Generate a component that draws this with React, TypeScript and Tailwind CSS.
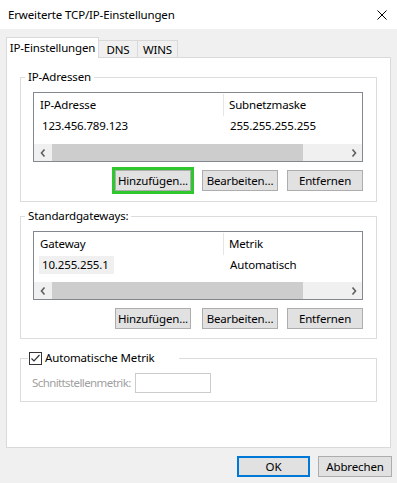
import React from "react";

const Chevron = ({ dir }: { dir: "left" | "right" }) => (
  <svg width="6" height="8" viewBox="0 0 6 8">
    {dir === "left" ? (
      <polyline points="4.5,0.5 1.5,4 4.5,7.5" fill="none" stroke="#606060" strokeWidth="1.6" />
    ) : (
      <polyline points="1.5,0.5 4.5,4 1.5,7.5" fill="none" stroke="#606060" strokeWidth="1.6" />
    )}
  </svg>
);

const ScrollBar = () => (
  <div className="flex h-[17px] bg-[#f0f0f0]">
    <div className="w-[17px] flex items-center justify-center">
      <Chevron dir="left" />
    </div>
    <div className="w-[251px] ml-px bg-[#cdcdcd]" />
    <div className="flex-1" />
    <div className="w-[17px] flex items-center justify-center">
      <Chevron dir="right" />
    </div>
  </div>
);

const Btn = ({ label, hl }: { label: string; hl?: boolean }) => (
  <button
    className={
      "w-[76px] h-[21px] bg-[#e1e1e1] border border-[#adadad] flex items-center justify-center leading-none whitespace-nowrap " +
      (hl ? "outline-[3px] outline-solid outline-[#2ec72e]" : "")
    }
  >
    {label}
  </button>
);

const ButtonRow = ({ hl }: { hl?: boolean }) => (
  <div className="flex justify-end mt-[8px]">
    <Btn label="Hinzufügen..." hl={hl} />
    <div className="ml-[11px]">
      <Btn label="Bearbeiten..." />
    </div>
    <div className="ml-[9px]">
      <Btn label="Entfernen" />
    </div>
  </div>
);

type ListProps = {
  h1: string;
  h2: string;
  c1: string;
  c2: string;
  height: string;
  selected?: boolean;
};

const ListView = ({ h1, h2, c1, c2, height, selected }: ListProps) => (
  <div className={"border border-[#828790] flex flex-col " + height}>
    <div className="flex h-[24px]">
      <div className="w-[190px] pl-[6px] flex items-center border-r border-[#e5e5e5] my-[1px]">{h1}</div>
      <div className="pl-[5px] flex items-center">{h2}</div>
    </div>
    <div className="flex h-[18px]">
      <div className="w-[190px] pl-[5px] flex items-center">
        <span className={"h-[18px] px-[3px] flex items-center " + (selected ? "bg-[#f0f0f0] w-[75px]" : "")}>{c1}</span>
      </div>
      <div className="pl-[6px] flex items-center">{c2}</div>
    </div>
    <div className="flex-1" />
    <ScrollBar />
  </div>
);

const GroupLabel = ({ text }: { text: string }) => (
  <div className="absolute left-[4px] -top-[9px] h-[16px] px-[3px] bg-white flex items-center">{text}</div>
);

export default function App() {
  return (
    <div className="w-[397px] h-[483px] bg-[#f0f0f0] text-[11.5px] tracking-[-0.15px] text-black font-['Noto_Sans',Arial,sans-serif] flex flex-col whitespace-nowrap">
      {/* title bar */}
      <div className="h-[29px] bg-white flex items-center justify-between pl-[8px] pr-[10px]">
        <span>Erweiterte TCP/IP-Einstellungen</span>
        <svg width="10" height="10" viewBox="0 0 10 10">
          <line x1="0.5" y1="0.5" x2="9.5" y2="9.5" stroke="#000" strokeWidth="1" />
          <line x1="9.5" y1="0.5" x2="0.5" y2="9.5" stroke="#000" strokeWidth="1" />
        </svg>
      </div>

      {/* tabs */}
      <div className="mt-[8px] ml-[6px] h-[20px] flex items-end">
        <div className="relative z-10 -mb-px h-[21px] w-[93px] bg-white border border-b-0 border-[#d9d9d9] flex items-center justify-center">
          IP-Einstellungen
        </div>
        <div className="h-[17px] w-[39px] border-t border-r border-[#d9d9d9] flex items-center justify-center pt-[2px]">
          DNS
        </div>
        <div className="h-[17px] w-[40px] border-t border-r border-[#d9d9d9] flex items-center justify-center pt-[2px]">
          WINS
        </div>
      </div>

      {/* panel */}
      <div className="ml-[6px] w-[385px] h-[391px] bg-white border border-[#d9d9d9] px-[13px] pt-[19px]">
        <div className="relative h-[125px] border border-[#dcdcdc] pl-[12px] pr-[13px] pt-[14px]">
          <GroupLabel text="IP-Adressen" />
          <ListView h1="IP-Adresse" h2="Subnetzmaske" c1="123.456.789.123" c2="255.255.255.255" height="h-[70px]" />
          <ButtonRow hl />
        </div>

        <div className="relative mt-[14px] h-[123px] border border-[#dcdcdc] pl-[12px] pr-[13px] pt-[14px]">
          <GroupLabel text="Standardgateways:" />
          <ListView h1="Gateway" h2="Metrik" c1="10.255.255.1" c2="Automatisch" height="h-[69px]" selected />
          <ButtonRow />
        </div>

        <div className="relative mt-[19px] h-[44px] border border-[#dcdcdc] pl-[11px] pt-[14px]">
          <div className="absolute left-[7px] -top-[9px] h-[16px] w-[151px] pl-px bg-white flex items-center">
            <div className="w-[13px] h-[13px] border border-[#333333] bg-white flex items-center justify-center">
              <svg width="11" height="11" viewBox="0 0 11 11">
                <polyline points="1.5,5.5 4,8 9.5,2" fill="none" stroke="#333333" strokeWidth="1.2" />
              </svg>
            </div>
            <span className="ml-[3px]">Automatische Metrik</span>
          </div>
          <div className="flex items-center h-[20px]">
            <span className="w-[103px] text-[#a0a0a0] tracking-[-0.6px]">Schnittstellenmetrik:</span>
            <div className="w-[76px] h-[20px] border border-[#cccccc] bg-white" />
          </div>
        </div>
      </div>

      {/* dialog buttons */}
      <div className="flex justify-end mt-[8px] pr-[5px]">
        <button className="w-[73px] h-[21px] bg-[#e1e1e1] border-2 border-[#0078d7] flex items-center justify-center leading-none">
          OK
        </button>
        <button className="ml-[8px] w-[74px] h-[21px] bg-[#e1e1e1] border border-[#adadad] flex items-center justify-center leading-none">
          Abbrechen
        </button>
      </div>
    </div>
  );
}
